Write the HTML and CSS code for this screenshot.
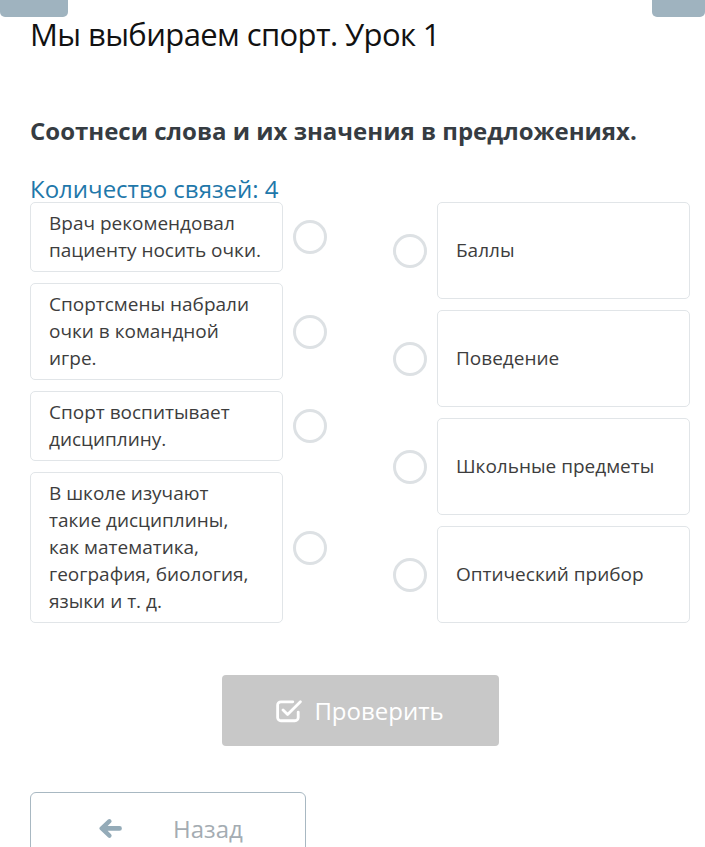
FILE: index.html
```html
<!DOCTYPE html>
<html lang="ru">
  <head>
    <meta charset="UTF-8" />
    <meta name="viewport" content="width=device-width, initial-scale=1.0" />
    <title>Мы выбираем спорт. Урок 1</title>
    <link rel="stylesheet" href="styles.css">
  </head>
  <body>
    <div class="top-tabs">
      <div class="tab tab-left"></div>
      <div class="tab tab-right"></div>
    </div>

    <div class="page">
      <h1 class="lesson-title">Мы выбираем спорт. Урок 1</h1>
      <h2 class="task-title">Соотнеси слова и их значения в предложениях.</h2>
      <div class="links-count">Количество связей: 4</div>

      <div class="match">
        <div class="match-col">
          <div class="row">
            <div class="card">Врач рекомендовал пациенту носить очки.</div>
            <span class="dot"></span>
          </div>
          <div class="row">
            <div class="card">Спортсмены набрали очки в командной игре.</div>
            <span class="dot"></span>
          </div>
          <div class="row">
            <div class="card">Спорт воспитывает дисциплину.</div>
            <span class="dot"></span>
          </div>
          <div class="row">
            <div class="card">В школе изучают такие дисциплины, как математика, география, биология, языки и т. д.</div>
            <span class="dot"></span>
          </div>
        </div>

        <div class="match-col">
          <div class="row">
            <span class="dot"></span>
            <div class="card card-answer">Баллы</div>
          </div>
          <div class="row">
            <span class="dot"></span>
            <div class="card card-answer">Поведение</div>
          </div>
          <div class="row">
            <span class="dot"></span>
            <div class="card card-answer">Школьные предметы</div>
          </div>
          <div class="row">
            <span class="dot"></span>
            <div class="card card-answer">Оптический прибор</div>
          </div>
        </div>
      </div>

      <div class="check-wrap">
        <button class="check-button" disabled>
          <svg width="26" height="26" viewBox="0 0 24 24" fill="none" stroke="#fff" stroke-width="2.6" stroke-linecap="round" stroke-linejoin="round">
            <path d="M20.5 13v5a3 3 0 0 1-3 3H4.5a3 3 0 0 1-3-3V6.5a3 3 0 0 1 3-3h11" />
            <path d="M6.5 11l4.2 4.2L22.5 3.5" />
          </svg>
          <span>Проверить</span>
        </button>
      </div>

      <button class="back-button">
        <svg width="26" height="22" viewBox="0 0 26 22">
          <path d="M11 2.5a2.2 2.2 0 0 1 3.1 3.1L10.6 9H22.5a2.4 2.4 0 0 1 0 4.8H10.6l3.5 3.4a2.2 2.2 0 0 1-3.1 3.1L2.8 12.4a1.5 1.5 0 0 1 0-2.1z" fill="#94abb8" />
        </svg>
        <span>Назад</span>
      </button>
    </div>
  </body>
</html>
```

FILE: styles.css
```css
body {
  margin: 0;
  padding: 0;
  background-color: #ffffff;
  font-family: "Open Sans", Arial, sans-serif;
  color: #3b3b3b;
}
.top-tabs {
  display: flex;
  justify-content: space-between;
  height: 17px;
}
.tab {
  background-color: #9fb3bf;
  border-radius: 0 0 5px 5px;
}
.tab-left {
  width: 68px;
}
.tab-right {
  width: 53px;
}
.page {
  padding: 0 15px 0 30px;
}
.lesson-title {
  margin: 0;
  font-size: 31px;
  font-weight: 400;
  letter-spacing: -0.6px;
  line-height: 34px;
  color: #111;
}
.task-title {
  margin: 65px 0 0;
  font-size: 24px;
  font-weight: 700;
  line-height: 30px;
  color: #363c42;
}
.links-count {
  margin-top: 29px;
  font-size: 24px;
  line-height: 27px;
  color: #1f78aa;
}
.match {
  display: flex;
  justify-content: space-between;
}
.match-col {
  display: flex;
  flex-direction: column;
  gap: 11px;
  width: 297px;
}
.row {
  display: flex;
  align-items: center;
  gap: 10px;
}
.card {
  width: 253px;
  box-sizing: border-box;
  padding: 7px 20px 7px 18px;
  border: 1px solid #e1e5e8;
  border-radius: 5px;
  font-size: 19px;
  line-height: 27px;
  color: #3d3d3d;
}
.card-answer {
  display: flex;
  align-items: center;
  min-height: 97px;
}
.dot {
  flex: none;
  width: 34px;
  height: 34px;
  box-sizing: border-box;
  border: 3px solid #dde1e4;
  border-radius: 50%;
  background: #fff;
}
.check-wrap {
  display: flex;
  justify-content: center;
  margin-top: 52px;
}
.check-button {
  display: flex;
  align-items: center;
  justify-content: center;
  gap: 12px;
  width: 277px;
  height: 71px;
  border: none;
  border-radius: 4px;
  background-color: #c8c8c8;
  color: #fff;
  font-family: "Open Sans", Arial, sans-serif;
  font-size: 24px;
  padding: 0;
}
.back-button {
  display: flex;
  align-items: center;
  gap: 50px;
  margin-top: 46px;
  width: 276px;
  height: 72px;
  padding: 0 0 0 66px;
  border: 1px solid #a8b8c2;
  border-radius: 6px;
  background: #fff;
  color: #a4acb2;
  font-family: "Open Sans", Arial, sans-serif;
  font-size: 24px;
}
```
